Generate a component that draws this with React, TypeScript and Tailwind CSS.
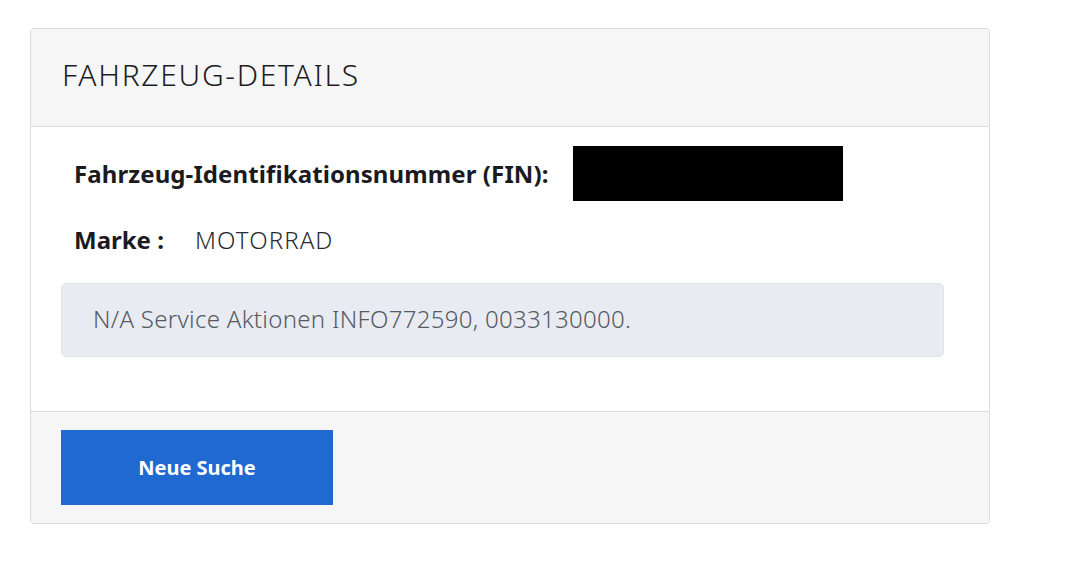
import React from "react";

export default function App() {
  return (
    <div className="min-h-[586px] bg-white pt-[28px] pl-[30px]" style={{ fontFamily: '"Noto Sans", "Open Sans", sans-serif' }}>
      <div className="w-[960px] rounded-[4px] border border-[#dcdcdc] overflow-hidden">
        <div className="h-[98px] bg-[#f6f6f6] border-b border-[#dcdcdc] flex items-center pl-[31px] pb-[6px]">
          <h1 className="text-[30px] font-light text-[#1c1c24] tracking-[1.7px]">FAHRZEUG-DETAILS</h1>
        </div>
        <div className="h-[284px] bg-white pl-[30px] pr-[45px] pt-[19px]">
          <div className="flex items-center pl-[13px] h-[55px]">
            <span className="text-[24px] font-bold text-[#1a1a1f] tracking-[0.1px]">Fahrzeug-Identifikationsnummer (FIN):</span>
            <div className="ml-[24px] w-[270px] h-[55px] bg-black" />
          </div>
          <div className="flex items-center pl-[13px] mt-[25px] h-[28px]">
            <span className="text-[24px] font-bold text-[#1a1a1f]">Marke :</span>
            <span className="ml-[31px] text-[24px] font-light text-[#2a2a30] tracking-[1.1px]">MOTORRAD</span>
          </div>
          <div className="mt-[29px] h-[74px] rounded-[5px] border border-[#dfe3ea] bg-[#e8ebf2] flex items-center pl-[31px] pb-[3px]">
            <span className="text-[24px] font-light text-[#555a62] tracking-[0.3px]">N/A Service Aktionen INFO772590, 0033130000.</span>
          </div>
        </div>
        <div className="h-[112px] bg-[#f6f6f6] border-t border-[#dcdcdc] pl-[30px] pt-[18px]">
          <button className="w-[272px] h-[75px] bg-[#1f69d1] text-white text-[20px] font-bold">Neue Suche</button>
        </div>
      </div>
    </div>
  );
}
